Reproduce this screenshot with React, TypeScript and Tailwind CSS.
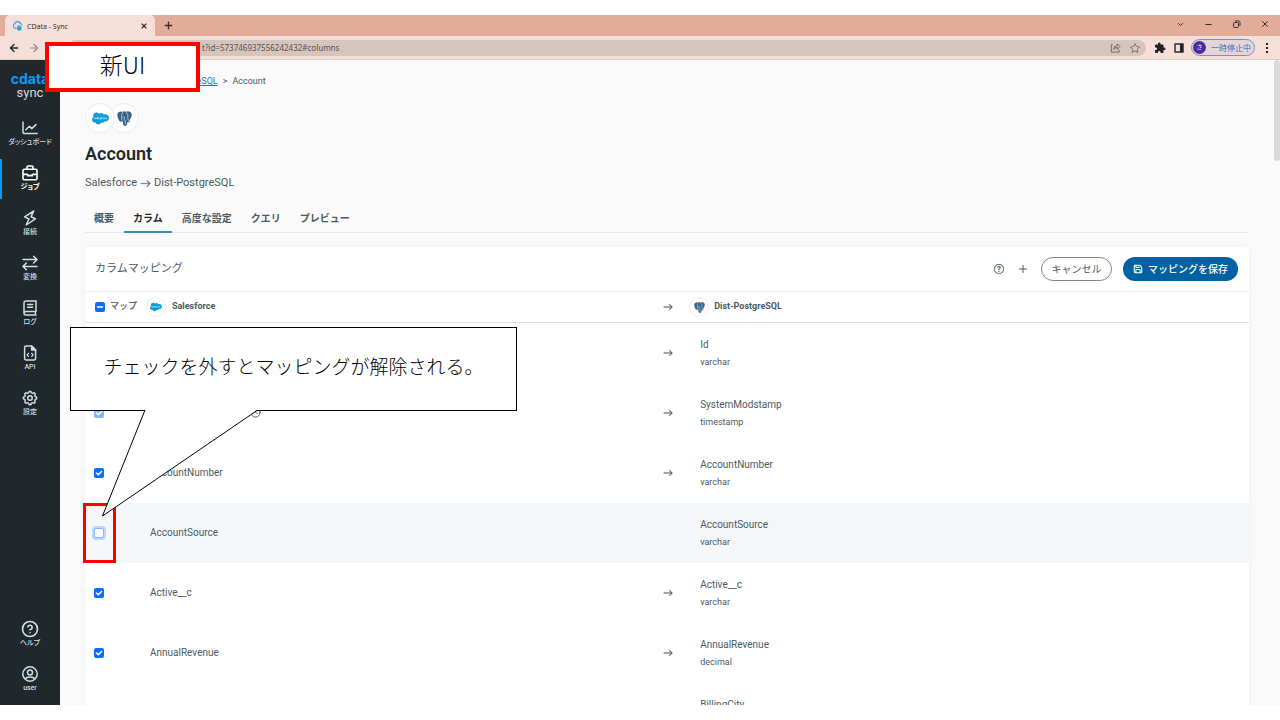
import type { ReactNode } from 'react'
import clsx from 'clsx'
import { BsArrowRight, BsQuestionCircle, BsStar } from 'react-icons/bs'
import { FaSalesforce } from 'react-icons/fa'
import { MdExtension } from 'react-icons/md'
import { TbSettings } from 'react-icons/tb'
import {
  ArrowLeft,
  ArrowRight,
  ChevronDown,
  CircleQuestionMark,
  Clock,
  Minus,
  Plus,
  Save,
  X,
} from 'lucide-react'

interface NavEntry {
  label: string
  icon: ReactNode
  active?: boolean
}

interface ColumnRow {
  source: string
  target: string
  type: string
  mapped: boolean
  locked?: boolean
  timestamp?: boolean
}

function ChartIcon() {
  return (
    <svg viewBox="0 0 16 16" className="size-4" fill="none" stroke="currentColor" strokeWidth="1.5" strokeLinecap="round" strokeLinejoin="round">
      <path d="M1 2v10.600a1 1 0 0 0 1 1h13.200M3.800 9.800l3.600-3.600 2.400 2.400L14 4.600" />
    </svg>
  )
}

function BriefcaseIcon() {
  return (
    <svg viewBox="0 0 16 16" className="size-4" fill="none" stroke="currentColor" strokeWidth="1.6">
      <rect x="1" y="4.2" width="14" height="10.6" rx="1.2" />
      <path d="M5 4V2.2Q5 1 6.200 1h3.600Q11 1 11 2.200V4M1 9.400h4.600M10.400 9.400H15M5.800 9v1.600h4.400V9" />
    </svg>
  )
}

function BoltIcon() {
  return (
    <svg viewBox="0 0 16 16" className="size-4" fill="none" stroke="currentColor" strokeWidth="1.500" strokeLinejoin="round">
      <path d="M11.800 1 2.600 6.800 7 9 4.200 15l9.200-6.200L9 6.800z" />
    </svg>
  )
}

function TransformIcon() {
  return (
    <svg viewBox="0 0 16 16" className="size-4" fill="none" stroke="currentColor" strokeWidth="1.500" strokeLinecap="round" strokeLinejoin="round">
      <path d="M1 4.600h14M11.600 1.200 15 4.600 11.600 8M15 11.400H1M4.400 8 1 11.400l3.400 3.400" />
    </svg>
  )
}

function LogIcon() {
  return (
    <svg viewBox="0 0 16 16" className="size-4" fill="none" stroke="currentColor" strokeWidth="1.5" strokeLinecap="round">
      <path d="M14 11.6V1H3.8A1.8 1.8 0 0 0 2 2.8v10.4A1.8 1.8 0 0 0 3.8 15H14M14 11.6H3.8a1.7 1.7 0 0 0 0 3.4M13.4 11.8V15M5.6 4.4h5M5.6 7.2h5" />
    </svg>
  )
}

function ApiIcon() {
  return (
    <svg viewBox="0 0 16 16" className="size-4" fill="none" stroke="currentColor" strokeWidth="1.5" strokeLinejoin="round">
      <path d="M9.6 1H4a1.4 1.4 0 0 0-1.4 1.4v11.2A1.4 1.4 0 0 0 4 15h8.2a1.4 1.4 0 0 0 1.4-1.4V5z" />
      <path d="M9.6 1v4h4z" fill="currentColor" />
      <path d="m6.8 8-1.7 1.9 1.7 1.9M9.4 8l1.7 1.9-1.7 1.9" strokeWidth="1.2" />
    </svg>
  )
}

function UserIcon() {
  return (
    <svg viewBox="0 0 16 16" className="size-4" fill="none" stroke="currentColor" strokeWidth="1.5">
      <circle cx="8" cy="8" r="7.2" />
      <circle cx="8" cy="6.4" r="2.5" />
      <path d="M3 13q1.400-2 5-2t5 2" />
    </svg>
  )
}

function SyncIcon() {
  return (
    <svg viewBox="0 0 16 16" className="size-[11px]" fill="none">
      <path d="M7 12H4.600a3.500 3.500 0 0 1-.8-6.400A4.600 4.600 0 0 1 12.400 5q2 .4 2.400 2.600" stroke="#2a9fe0" strokeWidth="1.6" />
      <path d="M7.600 8.400h6v6q-3 1.600-6 0z" fill="#2a9fe0" />
      <ellipse cx="10.6" cy="8.4" rx="3" ry="1.2" fill="#7cc7ef" />
    </svg>
  )
}

function ElephantIcon({ className }: { className: string }) {
  return (
    <svg viewBox="0 0 16 16" className={className} strokeLinejoin="round" strokeLinecap="round">
      <path
        d="M3.600 1Q1 1 .8 3.600q0 3 1.800 6.600 1 1.400 2.200.4l.8-.6.6.6q-.4 1 .6 1.200l.2 2.600q.6 1.600 2.200 1 1-.4 1.200-1.800l.2-2q1.400.2 2.600-.6-.8-.6.2-2Q15.600 6 15.200 3 14.600.8 11.600.8L9.800 1.200Q8 .4 6.200 1.200z"
        fill="#336791"
        stroke="#3b4a55"
        strokeWidth=".8"
      />
      <path d="M6 1.600Q4.600 3 5 6.400q.2 2-.2 3.200M10 1.400q2.200 2.200 1.600 5-.4 2 .6 4M6 6.600q1.400-1 2 .2.200 1.600-.6 3M8.800 10.200l.2 3.600" fill="none" stroke="#c5d5e2" strokeWidth=".8" />
    </svg>
  )
}

const NAV_ITEMS: NavEntry[] = [
  { label: 'ダッシュボード', icon: <ChartIcon /> },
  { label: 'ジョブ', icon: <BriefcaseIcon />, active: true },
  { label: '接続', icon: <BoltIcon /> },
  { label: '変換', icon: <TransformIcon /> },
  { label: 'ログ', icon: <LogIcon /> },
  { label: 'API', icon: <ApiIcon /> },
  { label: '設定', icon: <TbSettings className="size-[18px]" /> },
]

const FOOTER_ITEMS: NavEntry[] = [
  { label: 'ヘルプ', icon: <CircleQuestionMark className="size-[18px]" strokeWidth={2.2} /> },
  { label: 'user', icon: <UserIcon /> },
]

const TABS = ['概要', 'カラム', '高度な設定', 'クエリ', 'プレビュー']

const ROWS: ColumnRow[] = [
  { source: 'Id', target: 'Id', type: 'varchar', mapped: true, locked: true },
  { source: 'SystemModstamp', target: 'SystemModstamp', type: 'timestamp', mapped: true, locked: true, timestamp: true },
  { source: 'AccountNumber', target: 'AccountNumber', type: 'varchar', mapped: true },
  { source: 'AccountSource', target: 'AccountSource', type: 'varchar', mapped: false },
  { source: 'Active__c', target: 'Active__c', type: 'varchar', mapped: true },
  { source: 'AnnualRevenue', target: 'AnnualRevenue', type: 'decimal', mapped: true },
  { source: 'BillingCity', target: 'BillingCity', type: 'varchar', mapped: true },
]

function TabStrip() {
  return (
    <div className="flex h-[21px] shrink-0 items-end bg-[#e3ab99] text-[#3c2f2b]">
      <div className="ml-[5px] flex h-[21px] w-[150px] items-center gap-1 rounded-t-[5px] bg-[#f5dfd8] px-[7px]">
        <SyncIcon />
        <span className="flex-1 pt-[2px] text-[7px] leading-[10px]">CData - Sync</span>
        <button type="button" aria-label="タブを閉じる">
          <X className="size-2" strokeWidth={3.5} />
        </button>
      </div>
      <button type="button" aria-label="新しいタブ" className="flex h-[21px] w-[27px] items-center justify-center">
        <Plus className="size-[11px]" strokeWidth={3} />
      </button>
      <div className="ml-auto flex h-[18px] items-center self-start pr-[10px]">
        <button type="button" aria-label="タブを検索" className="mr-[19px]">
          <ChevronDown className="size-[9px]" strokeWidth={2.4} />
        </button>
        <button type="button" aria-label="最小化" className="mr-[19px]">
          <Minus className="size-[9px]" strokeWidth={3} />
        </button>
        <button type="button" aria-label="元に戻す" className="mr-[19px]">
          <svg viewBox="0 0 9 9" className="size-[9px]" fill="none" stroke="currentColor">
            <rect x="1.5" y="2.5" width="5" height="5" rx="1" />
            <path d="M3 1h3.5A1.5 1.5 0 0 1 8 2.500V6" />
          </svg>
        </button>
        <button type="button" aria-label="閉じる">
          <X className="size-[10px]" strokeWidth={2.4} />
        </button>
      </div>
    </div>
  )
}

function AddressBar() {
  return (
    <div className="flex h-6 shrink-0 items-center border-b border-[#dccfca] bg-[#f5dfd8] pr-[9px] pl-2">
      <button type="button" aria-label="戻る">
        <ArrowLeft className="size-3" strokeWidth={2.6} />
      </button>
      <button type="button" aria-label="進む" className="ml-2 text-[#9a8883]">
        <ArrowRight className="size-3" strokeWidth={2.4} />
      </button>
      <div className="ml-7 flex h-4 flex-1 items-center gap-[9px] rounded-full bg-[#d6c4be] pr-[6px] pl-[134px] text-[#6d605c]">
        <input
          aria-label="アドレス"
          readOnly
          value="t?id=573746937556242432#columns"
          className="min-w-0 flex-1 bg-transparent text-[8px] text-[#5d514d] outline-none"
        />
        <svg viewBox="0 0 12 12" className="size-[11px]" fill="none" stroke="currentColor">
          <path d="M3 3H1.500v8H10V8.500M4 8q0-4 4-4V2l3 3-3 3V6Q5.500 6 4 8z" strokeLinejoin="round" />
        </svg>
        <BsStar className="size-[10px]" />
      </div>
      <MdExtension className="ml-2 size-3 text-[#222]" />
      <svg viewBox="0 0 10 10" className="ml-2 size-[10px] text-[#222]">
        <rect x="1" y="1" width="8" height="8" fill="none" stroke="currentColor" strokeWidth="1.4" />
        <rect x="6" y="1" width="3" height="8" fill="currentColor" />
      </svg>
      <button
        type="button"
        className="ml-[7px] flex h-[17px] w-16 items-center gap-[5px] rounded-full border border-[#6f93c4] bg-[#e6d5d6] pl-px text-[8px] whitespace-nowrap text-[#3d6fb8]"
      >
        <span className="flex size-[13px] items-center justify-center rounded-full bg-[#4d2aa5] text-[6px] text-white">さ</span>
        一時停止中
      </button>
      <button type="button" aria-label="メニュー" className="ml-2 flex w-2 flex-col items-center gap-[2px]">
        <span className="size-[2px] bg-[#222]" />
        <span className="size-[2px] bg-[#222]" />
        <span className="size-[2px] bg-[#222]" />
      </button>
    </div>
  )
}

function NavItem({ label, icon, active = false }: NavEntry) {
  return (
    <a
      href="#nav"
      className={clsx(
        'flex h-10 flex-col items-center border-l-2 pt-[5px] pr-[2px] text-[7px] leading-[10px] whitespace-nowrap',
        active ? 'border-[#0a9bf5] font-bold text-white' : 'border-transparent font-medium text-[#cfdde4]',
      )}
    >
      <span className="flex h-[18px] items-center">{icon}</span>
      <span className="[font-feature-settings:'palt']">{label}</span>
    </a>
  )
}

function Sidebar() {
  return (
    <nav className="flex w-[60px] shrink-0 flex-col bg-[#20282b] pt-3 pb-[5px]">
      <div className="flex flex-col items-center pb-[14px] text-center">
        <span className="font-['Inter'] text-[14px] leading-[14px] font-bold text-[#0a9bf5]">cdata</span>
        <span className="text-[13px] leading-[14px] text-[#d5dbde]">sync</span>
      </div>
      <div className="flex flex-col gap-[5px]">
        {NAV_ITEMS.map((item) => (
          <NavItem key={item.label} {...item} />
        ))}
      </div>
      <div className="mt-auto flex flex-col gap-[5px]">
        {FOOTER_ITEMS.map((item) => (
          <NavItem key={item.label} {...item} />
        ))}
      </div>
    </nav>
  )
}

interface MapCheckboxProps {
  label: string
  checked: boolean
  disabled?: boolean
  mixed?: boolean
}

function MapCheckbox({ label, checked, disabled = false, mixed = false }: MapCheckboxProps) {
  return (
    <span className={clsx('grid size-[10px] shrink-0 place-items-center', disabled && 'opacity-50')}>
      <input
        type="checkbox"
        aria-label={label}
        defaultChecked={checked}
        disabled={disabled}
        className={clsx(
          'col-start-1 row-start-1 size-[10px] appearance-none rounded-[2px]',
          checked ? 'bg-[#0d6efd]' : 'border border-[#86b7fe] bg-white ring-2 ring-[#bdd7fb]',
        )}
      />
      {checked ? (
        <svg viewBox="0 0 10 10" className="pointer-events-none col-start-1 row-start-1 size-[10px]" fill="none" stroke="#fff" strokeWidth="1.5">
          <path d={mixed ? 'M2.500 5h5' : 'm2.500 5 1.800 1.800L7.500 3.500'} strokeLinecap="round" />
        </svg>
      ) : null}
    </span>
  )
}

function ConnectorBadge({ kind, large = false }: { kind: 'salesforce' | 'postgresql'; large?: boolean }) {
  return (
    <span
      className={clsx(
        'flex shrink-0 items-center justify-center rounded-full border border-[#e9ecee] bg-white',
        large ? 'size-[30px]' : 'size-5',
      )}
    >
      {kind === 'salesforce' ? (
        <FaSalesforce className={clsx('text-[#0d9dda]', large ? 'size-[17px]' : 'size-3')} />
      ) : (
        <ElephantIcon className={large ? 'size-[15px]' : 'size-[11px]'} />
      )}
    </span>
  )
}

function MappingRow({ row }: { row: ColumnRow }) {
  return (
    <tr className={clsx('h-[60px]', !row.mapped && 'bg-[#f5f6f8]')}>
      <td className="pl-[9px]">
        <MapCheckbox label={row.source} checked={row.mapped} disabled={row.locked} />
      </td>
      <td className="pl-[5px] text-[10px]">
        <span className="flex items-center gap-[18px]">
          {row.source}
          {row.timestamp ? <Clock className="size-[11px]" /> : null}
        </span>
      </td>
      <td>{row.mapped ? <BsArrowRight className="mx-auto size-[10px]" strokeWidth={0.6} /> : null}</td>
      <td className="pl-[21px]">
        <div className="text-[10px] leading-[18px]">{row.target}</div>
        <div className="text-[9px] leading-4">{row.type}</div>
      </td>
    </tr>
  )
}

function MappingCard() {
  return (
    <section className="mt-[14px] rounded-[5px] bg-white shadow-[0_0_8px_rgba(0,0,0,0.05)]">
      <div className="flex h-11 items-center pr-[11px] pl-[10px]">
        <h2 className="flex-1 text-[11px]">カラムマッピング</h2>
        <button type="button" aria-label="ヘルプ" className="flex w-4 justify-center">
          <BsQuestionCircle className="size-[10px]" strokeWidth={0.4} />
        </button>
        <button type="button" aria-label="追加" className="ml-2 flex w-4 justify-center">
          <Plus className="size-3" />
        </button>
        <button type="button" className="ml-[10px] h-6 w-[71px] rounded-full border border-[#7c888e] text-[10px]">
          キャンセル
        </button>
        <button
          type="button"
          className="ml-[11px] flex h-6 items-center gap-[5px] rounded-full bg-[#0062a3] px-[10px] text-[10px] font-medium text-white"
        >
          <Save className="size-[10px]" strokeWidth={2.6} />
          マッピングを保存
        </button>
      </div>
      <table className="w-full table-fixed text-left">
        <thead>
          <tr className="h-[31px] border-t border-b border-t-[#eceef0] border-b-[#d9e2e8] text-[9px]">
            <th className="w-[60px] pl-[10px] font-medium">
              <span className="flex items-center gap-[5px] whitespace-nowrap">
                <MapCheckbox label="マップ" checked mixed />
                マップ
              </span>
            </th>
            <th className="w-[44%] pl-px">
              <span className="flex items-center gap-[6px]">
                <ConnectorBadge kind="salesforce" />
                Salesforce
              </span>
            </th>
            <th className="w-[22px]">
              <BsArrowRight className="mx-auto size-[10px]" strokeWidth={0.6} />
            </th>
            <th className="pl-[10px]">
              <span className="flex items-center gap-[5px]">
                <ConnectorBadge kind="postgresql" />
                Dist-PostgreSQL
              </span>
            </th>
          </tr>
        </thead>
        <tbody>
          {ROWS.map((row) => (
            <MappingRow key={row.source} row={row} />
          ))}
        </tbody>
      </table>
    </section>
  )
}

function JobPage() {
  return (
    <main className="min-w-0 flex-1 overflow-hidden bg-[#fafafa] px-[25px] pt-[14px]">
      <div className="flex h-4 items-center gap-[5px] pl-[67px] text-[9px]">
        <a href="#job" className="text-[#2f77ad] underline">
          Dist-PostgreSQL
        </a>
        <span>&gt;</span>
        <span>Account</span>
      </div>
      <div className="mt-[13px] flex">
        <span className="z-10 flex">
          <ConnectorBadge kind="salesforce" large />
        </span>
        <span className="-ml-[6px] flex">
          <ConnectorBadge kind="postgresql" large />
        </span>
      </div>
      <h1 className="mt-[10px] text-[18px] leading-[22px] font-semibold text-[#20282b]">Account</h1>
      <p className="mt-[10px] flex items-center gap-[3px] text-[11px] leading-4">
        Salesforce
        <BsArrowRight className="size-[11px]" strokeWidth={0.4} />
        Dist-PostgreSQL
      </p>
      <div className="mt-3 flex gap-px border-b border-[#e6e8ea]">
        {TABS.map((tab) => (
          <a
            key={tab}
            href="#columns"
            className={clsx(
              '-mb-px border-b-2 px-[9px] pt-2 pb-1 text-[10px] leading-4 font-bold',
              tab === 'カラム' ? 'border-[#2f8fc4] text-[#20282b]' : 'border-transparent',
            )}
          >
            {tab}
          </a>
        ))}
      </div>
      <MappingCard />
    </main>
  )
}

function Annotations() {
  return (
    <>
      <div className="absolute top-[42px] left-[45px] z-20 flex h-[50px] w-[155px] items-center justify-center border-4 border-[#f00] bg-white pb-[6px] font-['Noto_Sans_CJK_JP',sans-serif] text-[23px] font-light text-black">
        新UI
      </div>
      <div className="absolute top-[503px] left-[83px] z-20 h-[60px] w-[33px] border-3 border-[#f00]" />
      <div className="absolute top-[327px] left-[70px] z-20 flex h-[84px] w-[447px] items-center justify-center border border-black bg-white pb-[6px] font-['Noto_Sans_CJK_JP',sans-serif] text-[19px] font-light whitespace-nowrap text-black">
        チェックを外すとマッピングが解除される。
      </div>
      <svg className="absolute top-[410px] left-[100px] z-20 h-[110px] w-[160px]" viewBox="0 0 160 110">
        <path d="M45 0 2.500 106 157 0z" fill="#fff" />
        <path d="M45 0 2.500 106 157 0.500" fill="none" stroke="#000" strokeWidth="1" />
      </svg>
    </>
  )
}

export default function App() {
  return (
    <div className="relative flex h-screen flex-col overflow-hidden bg-white py-[15px] font-['Roboto','Noto_Sans_CJK_JP',sans-serif] text-[#4b5a62]">
      <header className="shrink-0 font-['Noto_Sans','Noto_Sans_CJK_JP',sans-serif] text-[#222]">
        <TabStrip />
        <AddressBar />
      </header>
      <div className="flex min-h-0 flex-1">
        <Sidebar />
        <JobPage />
        <div className="w-[6px] shrink-0 bg-[#fafafa]">
          <div className="h-[101px] rounded-sm bg-[#dadada]" />
        </div>
      </div>
      <Annotations />
    </div>
  )
}
